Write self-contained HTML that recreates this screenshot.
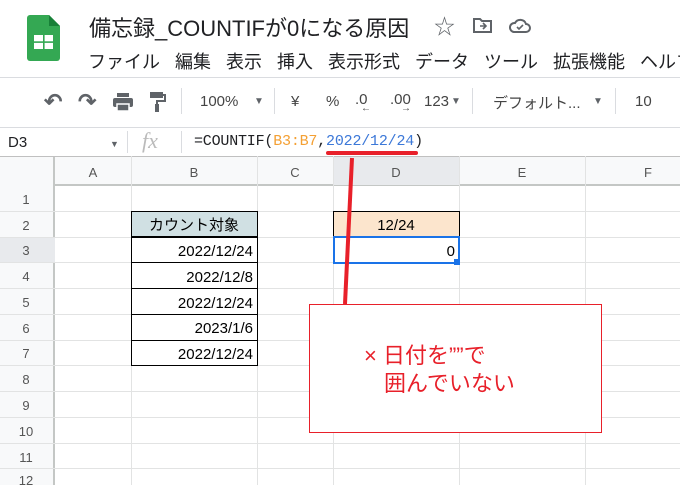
<!DOCTYPE html><html><head><meta charset="utf-8"><style>
*{margin:0;padding:0;box-sizing:border-box}
body{width:680px;height:485px;overflow:hidden;background:#fff;font-family:"Liberation Sans","Noto Sans CJK JP",sans-serif;position:relative;color:#202124}
.a{position:absolute;white-space:nowrap}
.mono{font-family:"Liberation Mono","Noto Sans CJK JP",monospace}
</style></head><body>
<svg class="a" style="left:27px;top:15px" width="33" height="46" viewBox="0 0 33 46"><path d="M3 0H22L33 11V43a3 3 0 0 1-3 3H3a3 3 0 0 1-3-3V3a3 3 0 0 1 3-3z" fill="#34a853"/><path d="M22 0V11H33z" fill="#188038"/><rect x="7" y="20" width="19" height="14" fill="#fff"/><rect x="16" y="20" width="1.6" height="14" fill="#34a853"/><rect x="7" y="26.3" width="19" height="1.6" fill="#34a853"/></svg>
<div class="a" style="left:89px;top:11px;font-size:22px;color:#202124">備忘録_COUNTIFが0になる原因</div>
<div class="a" style="left:434px;top:11px;font-size:21px;color:#5f6368">☆</div>
<svg class="a" style="left:473px;top:17px" width="20" height="16"><path d="M1 2h6l2 2h9v11H1z" fill="none" stroke="#5f6368" stroke-width="2"/><path d="M7 9h6M10 6l3 3-3 3" stroke="#5f6368" stroke-width="1.6" fill="none"/></svg>
<svg class="a" style="left:509px;top:18px" width="22" height="16"><path d="M5 14h12a4 4 0 0 0 0-8 6 6 0 0 0-11-1A4.5 4.5 0 0 0 5 14z" fill="none" stroke="#5f6368" stroke-width="2"/><path d="M8 9l2 2 4-4" stroke="#5f6368" stroke-width="1.6" fill="none"/></svg>
<div class="a" style="left:88px;top:48px;font-size:18px">ファイル&nbsp;&nbsp; 編集&nbsp;&nbsp; 表示&nbsp;&nbsp; 挿入&nbsp;&nbsp; 表示形式&nbsp;&nbsp; データ&nbsp;&nbsp; ツール&nbsp;&nbsp; 拡張機能&nbsp;&nbsp; ヘルプ</div>
<div class="a" style="left:0;top:77px;width:680px;height:1px;background:#dadce0"></div>
<div class="a" style="left:44px;top:89px;font-size:22px;color:#5f6368;font-weight:bold">↶</div>
<div class="a" style="left:78px;top:89px;font-size:22px;color:#5f6368;font-weight:bold">↷</div>
<svg class="a" style="left:113px;top:93px" width="20" height="18"><rect x="4" y="0" width="12" height="4" fill="#5f6368"/><rect x="0" y="5" width="20" height="9" rx="2" fill="#5f6368"/><rect x="4" y="11" width="12" height="7" fill="#5f6368" stroke="#fff" stroke-width="1.5"/></svg>
<svg class="a" style="left:150px;top:92px" width="16" height="20"><rect x="0" y="0" width="13" height="6" fill="#5f6368"/><path d="M13 3h2v6H7v3" stroke="#5f6368" stroke-width="2" fill="none"/><rect x="5" y="12" width="4" height="8" fill="#5f6368"/></svg>
<div class="a" style="left:181px;top:88px;width:1px;height:26px;background:#dadce0"></div>
<div class="a" style="left:200px;top:93px;font-size:15px;color:#444">100%</div>
<div class="a" style="left:254px;top:96px;font-size:10px;color:#5f6368">▼</div>
<div class="a" style="left:274px;top:88px;width:1px;height:26px;background:#dadce0"></div>
<div class="a" style="left:291px;top:93px;font-size:15px;color:#444">¥</div>
<div class="a" style="left:326px;top:93px;font-size:15px;color:#444">%</div>
<div class="a" style="left:355px;top:91px;font-size:15px;color:#444">.0</div>
<div class="a" style="left:361px;top:103px;font-size:10px;color:#444">←</div>
<div class="a" style="left:390px;top:91px;font-size:15px;color:#444">.00</div>
<div class="a" style="left:401px;top:103px;font-size:10px;color:#444">→</div>
<div class="a" style="left:424px;top:93px;font-size:15px;color:#444">123</div>
<div class="a" style="left:451px;top:96px;font-size:10px;color:#5f6368">▼</div>
<div class="a" style="left:472px;top:88px;width:1px;height:26px;background:#dadce0"></div>
<div class="a" style="left:493px;top:92px;font-size:15px;color:#444">デフォルト...</div>
<div class="a" style="left:593px;top:96px;font-size:10px;color:#5f6368">▼</div>
<div class="a" style="left:615px;top:88px;width:1px;height:26px;background:#dadce0"></div>
<div class="a" style="left:635px;top:93px;font-size:15px;color:#444">10</div>
<div class="a" style="left:0;top:127px;width:680px;height:1px;background:#dadce0"></div>
<div class="a" style="left:8px;top:134px;font-size:15px">D3</div>
<div class="a" style="left:110px;top:139px;font-size:9px;color:#5f6368">▼</div>
<div class="a" style="left:127px;top:131px;width:1px;height:22px;background:#dadce0"></div>
<div class="a" style="left:142px;top:128px;font-size:22px;color:#bbb;font-family:'Liberation Serif',serif;font-style:italic">fx</div>
<div class="a" style="left:181px;top:131px;width:1px;height:22px;background:#dadce0"></div>
<div class="a mono" style="left:194px;top:133px;font-size:15px;letter-spacing:-0.2px">=COUNTIF(<span style="color:#f4a034">B3:B7</span>,<span style="color:#3c78d8">2022/12/24</span>)</div>
<div class="a" style="left:326px;top:151px;width:92px;height:4px;background:#e8202a;border-radius:2px"></div>
<div class="a" style="left:0;top:156px;width:680px;height:30px;background:#f8f9fa;border-top:1px solid #c0c0c0;border-bottom:2px solid #c4c7c5"></div>
<div class="a" style="left:333px;top:157px;width:127px;height:28px;background:#e8eaed"></div>
<div class="a" style="left:0;top:157px;width:55px;height:328px;background:#f8f9fa;border-right:2px solid #c4c7c5"></div>
<div class="a" style="left:0;top:237px;width:55px;height:26px;background:#e8eaed"></div>
<svg class="a" style="left:0;top:156px" width="680" height="329">
<g stroke="#e2e3e3" stroke-width="1">
<line x1="131.5" y1="0" x2="131.5" y2="329"/><line x1="257.5" y1="0" x2="257.5" y2="329"/><line x1="333.5" y1="0" x2="333.5" y2="329"/><line x1="459.5" y1="0" x2="459.5" y2="329"/><line x1="585.5" y1="0" x2="585.5" y2="329"/>
<line x1="0" y1="55.5" x2="680" y2="55.5"/><line x1="0" y1="81.5" x2="680" y2="81.5"/><line x1="0" y1="106.5" x2="680" y2="106.5"/><line x1="0" y1="132.5" x2="680" y2="132.5"/><line x1="0" y1="158.5" x2="680" y2="158.5"/><line x1="0" y1="184.5" x2="680" y2="184.5"/><line x1="0" y1="209.5" x2="680" y2="209.5"/><line x1="0" y1="235.5" x2="680" y2="235.5"/><line x1="0" y1="261.5" x2="680" y2="261.5"/><line x1="0" y1="287.5" x2="680" y2="287.5"/><line x1="0" y1="312.5" x2="680" y2="312.5"/>
</g>
<g font-size="13" fill="#555" text-anchor="middle" font-family="Liberation Sans">
<text x="93" y="21">A</text><text x="194" y="21">B</text><text x="295" y="21">C</text><text x="396" y="21">D</text><text x="522" y="21">E</text><text x="648" y="21">F</text>
<text x="26" y="48">1</text><text x="26" y="74">2</text><text x="26" y="99">3</text><text x="26" y="125">4</text><text x="26" y="151">5</text><text x="26" y="177">6</text><text x="26" y="202">7</text><text x="26" y="228">8</text><text x="26" y="254">9</text><text x="26" y="280">10</text><text x="26" y="306">11</text><text x="26" y="329">12</text>
</g>
<rect x="131.5" y="55.5" width="126" height="25" fill="#d0e0e3" stroke="#000"/>
<rect x="131.5" y="81.5" width="126" height="128" fill="#fff" stroke="#000"/>
<g stroke="#000"><line x1="131" y1="106.5" x2="258" y2="106.5"/><line x1="131" y1="132.5" x2="258" y2="132.5"/><line x1="131" y1="158.5" x2="258" y2="158.5"/><line x1="131" y1="184.5" x2="258" y2="184.5"/></g>
<g font-size="15" fill="#000" font-family="Liberation Sans,Noto Sans CJK JP">
<text x="194" y="74" text-anchor="middle">カウント対象</text>
<text x="253" y="100" text-anchor="end">2022/12/24</text><text x="253" y="126" text-anchor="end">2022/12/8</text><text x="253" y="152" text-anchor="end">2022/12/24</text><text x="253" y="177" text-anchor="end">2023/1/6</text><text x="253" y="203" text-anchor="end">2022/12/24</text>
</g>
<rect x="333.5" y="55.5" width="126" height="25" fill="#fce5cd" stroke="#000"/>
<text x="396" y="74" font-size="15" text-anchor="middle" font-family="Liberation Sans">12/24</text>
<rect x="334" y="81" width="125" height="26" fill="none" stroke="#1a73e8" stroke-width="2"/>
<rect x="454" y="103" width="6" height="6" fill="#1a73e8"/>
<text x="455" y="100" font-size="15" text-anchor="end" font-family="Liberation Sans">0</text>
<line x1="352" y1="2" x2="345" y2="148" stroke="#e8202a" stroke-width="4"/>
<rect x="309.5" y="148.5" width="292" height="128" fill="#fff" stroke="#e8202a"/>
<g font-size="22" fill="#e8202a" font-family="Liberation Sans,Noto Sans CJK JP"><text x="364" y="207">× 日付を””で</text><text x="384" y="235">囲んでいない</text></g>
</svg>
</body></html>
